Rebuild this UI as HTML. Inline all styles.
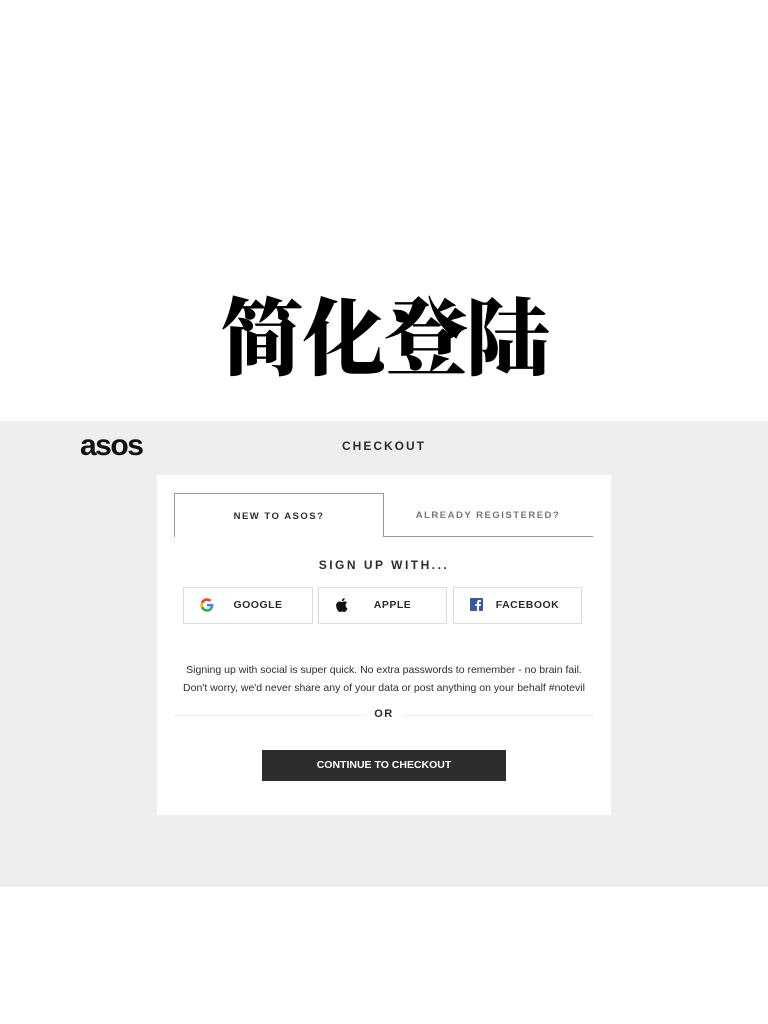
<!DOCTYPE html>
<html lang="zh-CN"><head><meta charset="utf-8"><style>
*{margin:0;padding:0;box-sizing:border-box}
body{width:768px;height:1024px;background:#fff;position:relative;font-family:"Liberation Sans",sans-serif;overflow:hidden}
.abs{position:absolute}
.title{left:0;width:768px;top:278px;text-align:center;font-family:"Noto Serif CJK SC",serif;font-weight:900;font-size:84px;line-height:110px;color:#000;letter-spacing:-2px}
.band{left:0;top:421px;width:768px;height:466px;background:#eeeeee}
.logo{left:80px;top:429px;font-size:30px;font-weight:bold;letter-spacing:-1.5px;color:#111}
.chk{left:0;width:768px;top:439px;text-align:center;font-size:12px;font-weight:bold;letter-spacing:2px;color:#2d2d2d}
.card{left:157px;top:475px;width:454px;height:340px;background:#fff}
.tab1{left:174px;top:493px;width:210px;height:44px;border:1px solid #999;border-bottom:none;text-align:center;line-height:46px;font-size:9.5px;font-weight:bold;letter-spacing:1.5px;color:#2d2d2d;background:#fff}
.tab2{left:383px;top:493px;width:210px;height:44px;border-bottom:1px solid #999;text-align:center;line-height:46px;font-size:9.5px;font-weight:bold;letter-spacing:1.5px;color:#777}
.sign{left:0;width:768px;top:558px;text-align:center;font-size:12px;font-weight:bold;letter-spacing:2.5px;color:#2d2d2d}
.btn{top:587px;height:37px;border:1px solid #ddd;font-size:10.5px;font-weight:bold;letter-spacing:.5px;color:#2d2d2d;line-height:35px}
.btn .ic{position:absolute;left:16px;top:10px}
.btn .t{position:absolute;left:0;right:0;text-align:center}
.txt{left:0;width:768px;top:661px;text-align:center;font-size:10.5px;line-height:18px;color:#2d2d2d}
.line{top:715px;height:1px;background:#eee}
.or{left:0;width:768px;top:708px;text-align:center;font-size:11px;font-weight:bold;letter-spacing:1.5px;color:#2d2d2d}
.cont{left:262px;top:750px;width:244px;height:31px;background:#2d2d2d;color:#fff;text-align:center;line-height:31px;font-size:10.5px;font-weight:bold}
</style></head><body>
<div class="abs title">简化登陆</div>
<div class="abs band"></div>
<div class="abs logo">asos</div>
<div class="abs chk">CHECKOUT</div>
<div class="abs card"></div>
<div class="abs tab2">ALREADY REGISTERED?</div>
<div class="abs tab1">NEW TO ASOS?</div>
<div class="abs sign">SIGN UP WITH...</div>
<div class="abs btn" style="left:183px;width:130px"><span class="t" style="left:20px">GOOGLE</span>
<svg class="ic" width="14" height="14" viewBox="0 0 24 24"><path fill="#4285F4" d="M23 12.3c0-.8-.1-1.6-.2-2.3H12v4.4h6.2c-.3 1.4-1.1 2.6-2.3 3.4v2.8h3.7C21.7 18.6 23 15.7 23 12.3z"/><path fill="#34A853" d="M12 23.5c3.1 0 5.7-1 7.6-2.8l-3.7-2.8c-1 .7-2.300 1.100-3.900 1.100-3 0-5.500-2-6.400-4.700H1.800v2.900c1.900 3.800 5.800 6.300 10.200 6.300z"/><path fill="#FBBC05" d="M5.6 14.3c-.2-.7-.4-1.4-.4-2.3s.1-1.6.4-2.3V6.8H1.8C1 8.4.6 10.1.6 12s.4 3.6 1.2 5.2l3.8-2.9z"/><path fill="#EA4335" d="M12 5c1.7 0 3.2.6 4.4 1.7l3.3-3.3C17.7 1.6 15.1.5 12 .5 7.6.5 3.7 3 1.8 6.8l3.8 2.9C6.5 7 9 5 12 5z"/></svg></div>
<div class="abs btn" style="left:318px;width:129px"><span class="t" style="left:20px">APPLE</span>
<svg class="ic" width="13" height="14" viewBox="0 0 24 26"><path fill="#111" d="M19.6 13.8c0-3.3 2.7-4.8 2.8-4.9-1.5-2.2-3.9-2.5-4.7-2.6-2-.2-3.9 1.2-4.9 1.2s-2.6-1.2-4.3-1.1C6.3 6.4 4.3 7.7 3.1 9.7.8 13.7 2.5 19.6 4.8 22.8c1.1 1.6 2.4 3.3 4.1 3.3 1.6-.1 2.3-1.1 4.3-1.1s2.5 1.1 4.3 1 2.8-1.6 3.9-3.2c1.2-1.8 1.7-3.5 1.7-3.6 0 0-3.4-1.3-3.5-5.4zM16.4 4.2c.9-1.1 1.5-2.6 1.3-4.1-1.3.1-2.9.9-3.8 2-.8.9-1.6 2.5-1.4 3.9 1.5.1 3-.7 3.9-1.8z"/></svg></div>
<div class="abs btn" style="left:453px;width:129px"><span class="t" style="left:20px">FACEBOOK</span>
<svg class="ic" width="13" height="13" viewBox="0 0 14 14"><rect width="14" height="14" rx="1" fill="#3b5998"/><path fill="#fff" d="M9.7 14V8.6h1.8l.3-2.1H9.7V5.2c0-.6.2-1 1-1h1.1V2.3c-.2 0-.9-.1-1.6-.1-1.6 0-2.7 1-2.7 2.8v1.5H5.7v2.1h1.8V14z"/></svg></div>
<div class="abs txt">Signing up with social is super quick. No extra passwords to remember - no brain fail.<br>Don't worry, we'd never share any of your data or post anything on your behalf #notevil</div>
<div class="abs line" style="left:174px;width:192px"></div>
<div class="abs line" style="left:402px;width:192px"></div>
<div class="abs or">OR</div>
<div class="abs cont">CONTINUE TO CHECKOUT</div>
</body></html>
